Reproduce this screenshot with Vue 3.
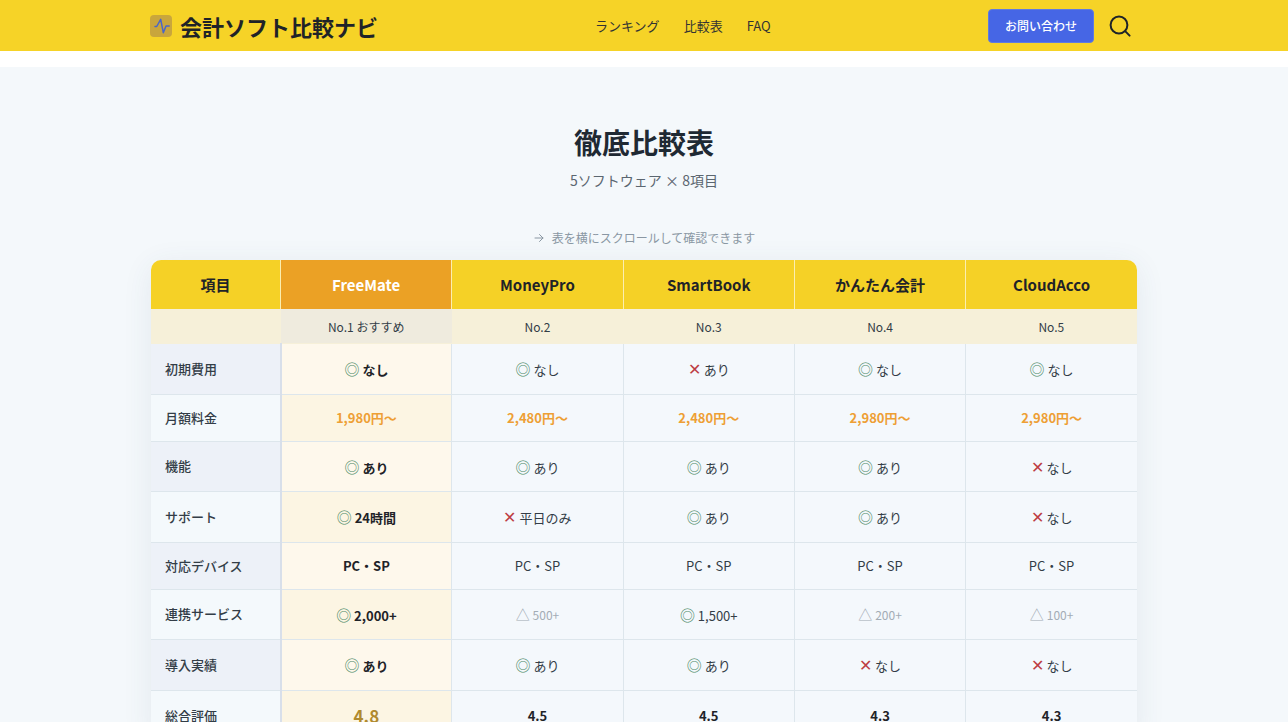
<template>
  <div class="page">
    <header class="header">
      <div class="header-inner">
        <a class="logo">
          <span class="logo-icon">
            <svg viewBox="0 0 22 22" width="22" height="22" fill="none" stroke="#4a66c8" stroke-width="1.5" stroke-linecap="round" stroke-linejoin="round">
              <path d="M5 11.5h1.7l4-7.2 2.6 13.4 2.7-6.7h3.2" />
            </svg>
          </span>
          <span>会計ソフト比較ナビ</span>
        </a>
        <nav class="nav">
          <a>ランキング</a>
          <a>比較表</a>
          <a>FAQ</a>
        </nav>
        <div class="actions">
          <button class="contact">お問い合わせ</button>
          <svg class="search" viewBox="0 0 24 24" width="24" height="24" fill="none" stroke="#1f2328" stroke-width="2" stroke-linecap="round">
            <circle cx="11" cy="11" r="8.4" />
            <path d="M17.4 17.4L21.6 21.6" />
          </svg>
        </div>
      </div>
    </header>

    <section class="compare">
      <h1>徹底比較表</h1>
      <p class="sub">5ソフトウェア × 8項目</p>
      <p class="hint">
        <svg viewBox="0 0 24 24" width="12" height="12" fill="none" stroke="#8a97a3" stroke-width="2" stroke-linecap="round" stroke-linejoin="round">
          <path d="M4 12h16M13 5l7 7-7 7" />
        </svg>
        表を横にスクロールして確認できます
      </p>

      <div class="table-wrap">
        <table>
          <thead>
            <tr class="names">
              <th class="col-label">項目</th>
              <th v-for="(p, i) in products" :key="p.name" :class="{ top: i === 0 }">{{ p.name }}</th>
            </tr>
            <tr class="ranks">
              <td class="rank-blank"></td>
              <td v-for="(p, i) in products" :key="p.name" :class="{ top: i === 0 }">{{ p.rank }}</td>
            </tr>
          </thead>
          <tbody>
            <tr v-for="row in rows" :key="row.label" :class="row.type">
              <th class="row-label">{{ row.label }}</th>
              <td v-for="(c, i) in row.cells" :key="i" :class="{ featured: i === 0 }">
                <template v-if="c.m">
                  <span :class="['mark', c.m]">{{ marks[c.m] }}</span>{{ ' ' }}<span :class="{ weak: c.m === 'tri' }">{{ c.t }}</span>
                </template>
                <template v-else>{{ c.t }}</template>
              </td>
            </tr>
          </tbody>
        </table>
      </div>
    </section>
  </div>
</template>

<script setup>
const marks = { ok: '◎', ng: '✕', tri: '△' }

const products = [
  { name: 'FreeMate', rank: 'No.1 おすすめ' },
  { name: 'MoneyPro', rank: 'No.2' },
  { name: 'SmartBook', rank: 'No.3' },
  { name: 'かんたん会計', rank: 'No.4' },
  { name: 'CloudAcco', rank: 'No.5' }
]

const ok = (t) => ({ m: 'ok', t })
const ng = (t) => ({ m: 'ng', t })
const tri = (t) => ({ m: 'tri', t })
const plain = (t) => ({ t })

const rows = [
  { label: '初期費用', cells: [ok('なし'), ok('なし'), ng('あり'), ok('なし'), ok('なし')] },
  { label: '月額料金', type: 'price', cells: ['1,980円〜', '2,480円〜', '2,480円〜', '2,980円〜', '2,980円〜'].map(plain) },
  { label: '機能', cells: [ok('あり'), ok('あり'), ok('あり'), ok('あり'), ng('なし')] },
  { label: 'サポート', cells: [ok('24時間'), ng('平日のみ'), ok('あり'), ok('あり'), ng('なし')] },
  { label: '対応デバイス', cells: Array(5).fill(plain('PC・SP')) },
  { label: '連携サービス', cells: [ok('2,000+'), tri('500+'), ok('1,500+'), tri('200+'), tri('100+')] },
  { label: '導入実績', cells: [ok('あり'), ok('あり'), ok('あり'), ng('なし'), ng('なし')] },
  { label: '総合評価', type: 'score', cells: ['4.8', '4.5', '4.5', '4.3', '4.3'].map(plain) }
]
</script>

<style>
html, body {
  margin: 0;
  background: #fff;
}
</style>

<style scoped>
.page {
  font-family: "Noto Sans CJK JP", "Noto Sans", sans-serif;
  color: #1f2933;
}

.header {
  background: #f6d327;
  height: 51px;
  margin-bottom: 16px;
}

.header-inner {
  width: 988px;
  height: 100%;
  margin: 0 auto;
  display: flex;
  align-items: center;
  box-sizing: border-box;
}

.logo {
  display: flex;
  align-items: center;
  gap: 8px;
  font-size: 22px;
  font-weight: 700;
  color: #1f2328;
  flex: 0 0 445px;
}

.logo-icon {
  width: 22px;
  height: 22px;
  border-radius: 4px;
  background: #c9a63c;
  display: flex;
}

.nav {
  display: flex;
  gap: 24px;
  font-size: 13px;
  color: #333;
}

.actions {
  display: flex;
  align-items: center;
  gap: 14px;
  margin-left: auto;
  padding-right: 6px;
}

.contact {
  width: 106px;
  height: 34px;
  border: 1px solid #5f7be0;
  border-radius: 4px;
  background: #4666e5;
  color: #fff;
  font: 500 12px "Noto Sans CJK JP", sans-serif;
}

.compare {
  background: #f4f8fb;
  padding: 54px 0 40px;
  text-align: center;
}

h1 {
  margin: 0;
  font-size: 28px;
  line-height: 42px;
  font-weight: 700;
  color: #1f2933;
}

.sub {
  margin: 6px 0 0;
  font-size: 14px;
  line-height: 22px;
  color: #5b6670;
}

.hint {
  margin: 38px 0 0;
  font-size: 12px;
  line-height: 18px;
  color: #8a97a3;
  display: flex;
  align-items: center;
  justify-content: center;
  gap: 7px;
}

.table-wrap {
  width: 986px;
  margin: 13px auto 0;
  border-radius: 10px;
  overflow: hidden;
  box-shadow: 0 6px 30px rgba(60, 80, 110, 0.09);
}

table {
  width: 100%;
  border-collapse: collapse;
  table-layout: fixed;
  font-size: 13px;
}

.col-label {
  width: 129px;
}

.names th {
  height: 49px;
  padding: 0;
  background: #f5d126;
  font-size: 15px;
  font-weight: 700;
  color: #1f2328;
  border-left: 1px solid #fbeeb0;
}

.names th:first-child {
  border-left: 0;
}

.names th.top {
  background: #eba125;
  color: #fff;
}

.ranks td {
  height: 34px;
  padding: 0;
  background: #f6f0d9;
  font-size: 12px;
  color: #333d47;
}

.ranks td.top {
  background: #efebde;
}

tbody td,
tbody th {
  padding: 12px 8px;
  line-height: 22px;
  border-top: 1px solid #dde6ec;
}

tbody tr:first-child td,
tbody tr:first-child th {
  border-top-color: #f6f0d9;
}

tbody td {
  border-left: 1px solid #dde6ec;
  background: #f4f8fc;
  color: #333d47;
}

.row-label {
  text-align: left;
  padding-left: 14px;
  font-size: 13px;
  font-weight: 500;
  color: #333d47;
  background: #f4f9fc;
  border-right: 2px solid #d8dfea;
}

tbody tr:nth-child(odd) .row-label {
  background: #edf1f8;
}

tbody td.featured {
  background: #fcf5e3;
  font-weight: 700;
  color: #1f2328;
  border-left: 0;
}

tbody tr:nth-child(odd) td.featured {
  background: #fef8ec;
}

.mark {
  font-size: 15px;
  line-height: 25.5px;
  font-weight: 400;
}

.mark.ok {
  color: #4c8a68;
}

.mark.ng {
  font-size: 16px;
  color: #bd3d44;
}

.mark.tri {
  font-size: 14px;
  color: #a3acb5;
}

.weak {
  color: #a3acb5;
  font-size: 12px;
  font-weight: 400;
}

.price td,
.price td.featured {
  font-weight: 700;
  color: #ee9f35;
}

.score td,
.score th {
  line-height: 26px;
}

.score td {
  font-weight: 700;
  color: #1f2328;
}

.score td.featured {
  font-size: 17px;
  color: #b08a2e;
}
</style>
